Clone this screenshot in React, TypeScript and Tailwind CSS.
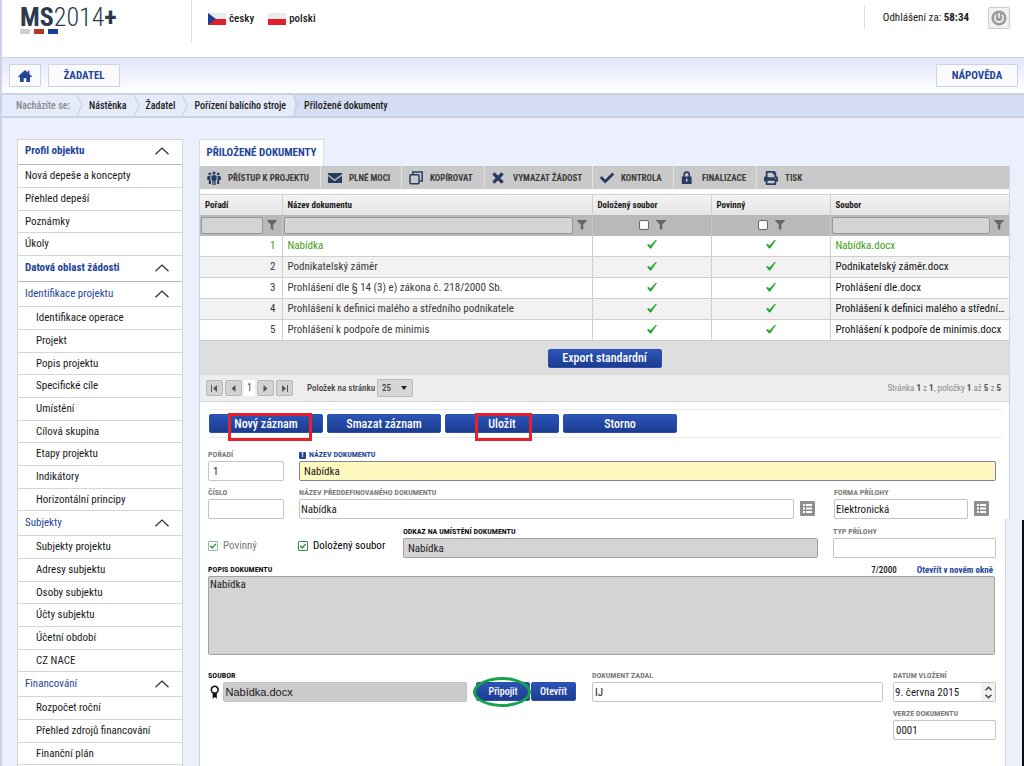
import type { InputHTMLAttributes, ReactNode } from "react";
import { FaCheck, FaFilter, FaPrint } from "react-icons/fa";

const toolbar: { label: string; icon: ReactNode; width: string }[] = [
  { label: "PŘÍSTUP K PROJEKTU", icon: <PeopleIcon />, width: "w-[121px]" },
  { label: "PLNÉ MOCI", icon: <MailIcon />, width: "w-[81px]" },
  { label: "KOPÍROVAT", icon: <CopyIcon />, width: "w-[83px]" },
  { label: "VYMAZAT ŽÁDOST", icon: <CrossIcon />, width: "w-[108px]" },
  { label: "KONTROLA", icon: <FaCheck size={14} />, width: "w-[81px]" },
  { label: "FINALIZACE", icon: <LockIcon />, width: "w-[83px]" },
  { label: "TISK", icon: <FaPrint size={14} />, width: "w-[80px]" },
];

const documents = [
  { name: "Nabídka", file: "Nabídka.docx" },
  { name: "Podnikatelský záměr", file: "Podnikatelský záměr.docx" },
  { name: "Prohlášení dle § 14 (3) e) zákona č. 218/2000 Sb.", file: "Prohlášení dle.docx" },
  {
    name: "Prohlášení k definici malého a středního podnikatele",
    file: "Prohlášení k definici malého a středního podnikatele.docx",
  },
  { name: "Prohlášení k podpoře de minimis", file: "Prohlášení k podpoře de minimis.docx" },
];

function PeopleIcon() {
  return (
    <svg width="14" height="14" viewBox="0 0 14 14" fill="currentColor">
      <circle cx="7" cy="2" r="1.6" />
      <circle cx="2.8" cy="3" r="1.4" />
      <circle cx="11.2" cy="3" r="1.4" />
      <path d="M5.200 4.200h3.600l.8.900v3.900h-.9V14H7.400v-4h-.8v4H5.300V9h-.9V5.100z" />
      <path d="M.8 5h2.600v4.600h.6V13H1.800V9H.2V6zM13.200 5h-2.600v4.600H10V13h2.200V9h1.600V6z" />
    </svg>
  );
}

function MailIcon() {
  return (
    <svg width="14" height="12" viewBox="0 0 14 12" fill="currentColor">
      <path d="M0 1h14v1.2L6.6 7.6 0 2.6z" />
      <path d="M0 4l6.6 5L14 3.8V11H0z" />
    </svg>
  );
}

function CopyIcon() {
  return (
    <svg width="14" height="14" viewBox="0 0 14 14" fill="none" stroke="currentColor" strokeWidth="1.5">
      <path d="M3.8 3.5V1h9.4v9h-2.4" />
      <rect x="1" y="3.7" width="9" height="9" rx="1" />
    </svg>
  );
}

function CrossIcon() {
  return (
    <svg width="12" height="12" viewBox="0 0 12 12" stroke="currentColor" strokeWidth="3.4">
      <path d="M1.4 1.4l9.2 9.2M10.6 1.4l-9.2 9.2" />
    </svg>
  );
}

function LockIcon() {
  return (
    <svg width="12" height="13" viewBox="0 0 12 13">
      <path d="M3.2 6V3.600a2.500 2.500 0 0 1 5 0V6" fill="none" stroke="currentColor" strokeWidth="1.600" />
      <path d="M.8 5.500h9.800V13H.8z" fill="currentColor" />
      <path d="M5.700 7.500v3.200" stroke="#c9c9c9" strokeWidth="1.500" />
    </svg>
  );
}

function HomeIcon() {
  return (
    <svg width="14" height="12" viewBox="0 0 14 12" fill="currentColor">
      <path d="M7 0l2.6 2.4V.8h1.8V4L14 6.4l-.9 1L12 6.5V12H8.3V8.2H5.7V12H2V6.5l-1.1.9-.9-1z" />
    </svg>
  );
}

function PowerIcon() {
  return (
    <svg width="16" height="16" viewBox="0 0 16 16" fill="none">
      <circle cx="8" cy="8" r="7.6" fill="#9a9da0" />
      <path d="M5.2 5a4.1 4.1 0 1 0 5.6 0M8 3v5" stroke="#f4f4f4" strokeWidth="1.6" />
    </svg>
  );
}

function ChevronUp() {
  return (
    <svg width="14" height="8" viewBox="0 0 14 8" fill="none" stroke="#2b2b2b" strokeWidth="1.2">
      <path d="M.5 7.2L7 1l6.500 6.200" />
    </svg>
  );
}

function Tick() {
  return (
    <svg className="mx-auto mb-[2px]" width="10" height="9" viewBox="0 0 10 9" fill="#27a832">
      <path d="M0 4.800l1.800-.9 1.700 1.700L8.600 0H10L4.200 8.600H3z" />
    </svg>
  );
}

function RibbonIcon() {
  return (
    <svg width="10" height="14" viewBox="0 0 10 14" fill="none">
      <path d="M2.8 8h4.4v6L5 12.4 2.8 14z" fill="#111" />
      <circle cx="5" cy="4.6" r="3.6" fill="#fff" stroke="#111" strokeWidth="1.7" />
    </svg>
  );
}

function SideHead({ children, strong }: { children: string; strong?: boolean }) {
  return (
    <button
      type="button"
      className={`flex w-full items-center justify-between border-b pr-[13px] pl-[7px] text-left text-[#24459a] ${
        strong ? "h-[26px] border-[#b5b5b5] pb-[2px] font-bold first:h-[25px]" : "h-[25px] border-[#d6d6d6]"
      }`}
    >
      <span>{children}</span>
      <ChevronUp />
    </button>
  );
}

function SideList({ items, nested }: { items: string[]; nested?: boolean }) {
  return (
    <ul>
      {items.map((item) => (
        <li key={item} className="h-[23px] border-b border-[#d6d6d6] nth-[3n]:h-[22px]">
          <a href="#" className={`flex h-full items-center ${nested ? "pl-[18px]" : "pl-[7px]"}`}>
            {item}
          </a>
        </li>
      ))}
    </ul>
  );
}

function BlueButton({ children, className }: { children: string; className: string }) {
  return (
    <button
      type="button"
      className={`rounded-[2px] border border-[#2a4fae] bg-linear-to-b from-[#2b55b8] to-[#1c3c90] font-medium whitespace-nowrap text-white ${className}`}
    >
      {children}
    </button>
  );
}

function FieldLabel({ id, tone, children }: { id: string; tone?: string; children: ReactNode }) {
  return (
    <label htmlFor={id} className={`flex h-[12px] items-center gap-[3px] text-[8px] leading-[12px] font-bold whitespace-nowrap ${tone ?? "text-[#7c7c7c]"}`}>
      {children}
    </label>
  );
}

function TextInput({ look, ...rest }: InputHTMLAttributes<HTMLInputElement> & { look?: string }) {
  return (
    <input
      type="text"
      className={`h-[20px] w-full min-w-0 rounded-[2px] border text-[11px] outline-none ${look ?? "border-[#c3c3c8] bg-white px-[2px]"}`}
      {...rest}
    />
  );
}

function PickButton({ label }: { label: string }) {
  return (
    <button type="button" aria-label={label} className="mb-[3px] grid size-[15px] shrink-0 place-items-center rounded-[1px] bg-[#8f8f8f]">
      <svg width="9" height="9" viewBox="0 0 9 9" fill="#fff">
        <path d="M0 0h2v2H0zM3 0h6v2H3zM0 3.5h2v2H0zM3 3.5h6v2H3zM0 7h2v2H0zM3 7h6v2H3z" />
      </svg>
    </button>
  );
}

function CheckField({ label, disabled }: { label: string; disabled?: boolean }) {
  return (
    <label className={`flex items-center gap-[5px] whitespace-nowrap ${disabled ? "text-[#777]" : "text-black"}`}>
      <span className="relative size-[10px]">
        <input
          type="checkbox"
          defaultChecked
          disabled={disabled}
          className="peer absolute inset-0 size-[10px] appearance-none rounded-[1px] border border-[#3b8a58] bg-white disabled:border-[#8dbb9c]"
        />
        <svg className="pointer-events-none absolute inset-0 hidden peer-checked:block" width="10" height="10" viewBox="0 0 10 10" fill="none" stroke="#1f8a3c" strokeWidth="1.300">
          <path d="M2.2 4.8l2 2.2 3.6-4.2" />
        </svg>
      </span>
      {label}
    </label>
  );
}

function PageButton({ label, path }: { label: string; path: string }) {
  return (
    <button type="button" aria-label={label} className="grid h-[16px] w-[17px] place-items-center rounded-[2px] border border-[#b9b9b9] bg-[#d3d3d3]">
      <svg width="7" height="7" viewBox="0 0 7 7" fill="#555">
        <path d={path} />
      </svg>
    </button>
  );
}

function FilterText({ label }: { label: string }) {
  return (
    <div className="flex items-center gap-[4px] pr-[5px] pl-px">
      <input aria-label={label} type="text" className="h-[17px] w-full min-w-0 rounded-[2px] border border-[#979797] bg-[#d4d4d4]" />
      <FaFilter size={10} className="shrink-0 text-[#666]" />
    </div>
  );
}

function FilterCheck({ label }: { label: string }) {
  return (
    <div className="flex items-center justify-center gap-[7px] pl-[2px]">
      <input aria-label={label} type="checkbox" className="size-[10px] appearance-none rounded-[2px] border border-[#666] bg-white" />
      <FaFilter size={10} className="text-[#666]" />
    </div>
  );
}

function Crumb({ children, tone }: { children: string; tone: string }) {
  return (
    <li className={`relative flex h-full items-center pr-[8px] pl-[11px] ${tone}`}>
      {children}
      <svg className="absolute top-0 -right-[5px] z-10" width="6" height="21" viewBox="0 0 6 21" fill="none" stroke="#c3cbe0">
        <path d="M0 0l5 10.5L0 21" />
      </svg>
    </li>
  );
}

export default function App() {
  return (
    <div className="relative h-screen overflow-hidden border-l-2 border-[#cdd0ea] bg-[#ecf0fc] font-['Roboto_Condensed','Liberation_Sans_Narrow','Roboto',sans-serif] text-[11px] leading-[14px] text-[#1a1a1a]">
      <header className="flex h-[58px] justify-between border-b border-[#ccd1dc] bg-white pr-[14px] pl-[18px]">
        <div className="flex">
          <div className="h-[42px] w-[172px] border-r border-[#dddddd] pt-[3px]">
            <div className="text-[26px] leading-[28px] whitespace-nowrap text-[#2c3a4b]">
              <span className="font-bold">MS</span>
              <span className="font-light">2014</span>
              <span className="font-bold">+</span>
            </div>
            <div className="-mt-[2px] flex gap-[4px]">
              <span className="h-[5px] w-[10px] bg-[#cfcfcf]" />
              <span className="h-[5px] w-[10px] bg-[#b2352b]" />
              <span className="h-[5px] w-[10px] bg-[#1c3f94]" />
            </div>
          </div>
          <nav className="flex h-[38px] items-center gap-[14px] pl-[16px] font-medium">
            <a href="#" className="flex items-center gap-[3px]">
              <svg width="18" height="12" viewBox="0 0 18 12">
                <path fill="#e9ebef" d="M0 0h18v6H0z" />
                <path fill="#e01f2d" d="M0 6h18v6H0z" />
                <path fill="#1c3f94" d="M0 0l8 6-8 6z" />
              </svg>
              česky
            </a>
            <a href="#" className="flex items-center gap-[3px]">
              <svg width="18" height="12" viewBox="0 0 18 12">
                <path fill="#e9ebef" d="M0 0h18v6H0z" />
                <path fill="#e01f2d" d="M0 6h18v6H0z" />
              </svg>
              polski
            </a>
          </nav>
        </div>
        <div className="mt-[6px] flex h-[23px] items-center border-l border-[#dddddd] pl-[18px]">
          Odhlášení za:&nbsp;<strong>58:34</strong>
          <button type="button" aria-label="Odhlásit" className="ml-[19px] grid size-[22px] place-items-center rounded-[2px] border border-[#ccc] bg-[#f1f1f1]">
            <PowerIcon />
          </button>
        </div>
      </header>

      <nav className="flex h-[37px] items-center justify-between border-b-2 border-[#ccd1de] bg-linear-to-b from-[#e1e8fb] to-white pr-[6px] pl-[7px] font-bold text-[#24459a]">
        <div className="flex gap-[7px]">
          <button type="button" aria-label="Domů" className="grid h-[23px] w-[32px] place-items-center rounded-[1px] border border-[#cfd3de] bg-[#fbfbfd]">
            <HomeIcon />
          </button>
          <button type="button" className="h-[23px] w-[72px] rounded-[1px] border border-[#cfd3de] bg-[#fbfbfd]">ŽADATEL</button>
        </div>
        <button type="button" className="h-[23px] w-[82px] rounded-[1px] border border-[#cfd3de] bg-[#fbfbfd]">NÁPOVĚDA</button>
      </nav>

      <ol className="flex h-[23px] items-center border-b-2 border-[#c9cfe2] bg-[#d5ddf2] text-[10px] font-medium whitespace-nowrap">
        <Crumb tone="bg-[#e6ebfa] pl-[14px]! text-[#858891]">Nacházíte se:</Crumb>
        <Crumb tone="bg-[#e6ebfa]">Nástěnka</Crumb>
        <Crumb tone="bg-[#e6ebfa]">Žadatel</Crumb>
        <Crumb tone="bg-[#e6ebfa]">Pořízení balícího stroje</Crumb>
        <li className="pl-[10px]">Přiložené dokumenty</li>
      </ol>

      <div className="flex gap-[16px] pt-[21px] pr-[14px] pl-[15px]">
        <aside className="w-[166px] shrink-0 border border-[#d6d6d6] bg-white">
          <SideHead strong>Profil objektu</SideHead>
          <SideList items={["Nová depeše a koncepty", "Přehled depeší", "Poznámky", "Úkoly"]} />
          <SideHead strong>Datová oblast žádosti</SideHead>
          <SideHead>Identifikace projektu</SideHead>
          <SideList
            nested
            items={[
              "Identifikace operace",
              "Projekt",
              "Popis projektu",
              "Specifické cíle",
              "Umístění",
              "Cílová skupina",
              "Etapy projektu",
              "Indikátory",
              "Horizontální principy",
            ]}
          />
          <SideHead>Subjekty</SideHead>
          <SideList nested items={["Subjekty projektu", "Adresy subjektu", "Osoby subjektu", "Účty subjektu", "Účetní období", "CZ NACE"]} />
          <SideHead>Financování</SideHead>
          <SideList nested items={["Rozpočet roční", "Přehled zdrojů financování", "Finanční plán"]} />
        </aside>

        <main className="min-w-0 flex-1">
          <h1 className="flex h-[27px] w-[125px] items-center justify-center border border-b-0 border-[#d8dbe6] bg-white text-[11px] font-bold whitespace-nowrap text-[#24459a]">
            PŘILOŽENÉ DOKUMENTY
          </h1>
          <div className="border-x border-[#cfd3e0] bg-white">
            <div className="flex h-[23px] bg-[#c9c9c9]">
              {toolbar.map((tool) => (
                <button
                  key={tool.label}
                  type="button"
                  className={`flex shrink-0 items-center gap-[7px] border-r border-[#e2e2e2] pl-[7px] text-[9px] font-bold whitespace-nowrap text-[#3b3b3b] last:border-r-0 ${tool.width}`}
                >
                  <span className="w-[14px] text-[#263c62]">{tool.icon}</span>
                  {tool.label}
                </button>
              ))}
            </div>

            <table className="mt-[5px] w-full table-fixed border-collapse border-t border-[#d0d0d0]">
              <colgroup>
                <col className="w-[82px]" />
                <col />
                <col className="w-[119px]" />
                <col className="w-[119px]" />
                <col className="w-[179px]" />
              </colgroup>
              <thead>
                <tr className="h-[20px] bg-linear-to-b from-[#f4f4f4] to-[#e4e4e4] text-left text-[9px]">
                  {["Pořadí", "Název dokumentu", "Doložený soubor", "Povinný", "Soubor"].map((title) => (
                    <th key={title} scope="col" className="border-r border-[#cfcfcf] p-0 pl-[5px] font-bold last:border-r-0">
                      {title}
                    </th>
                  ))}
                </tr>
                <tr className="h-[21px] bg-[#b9b9b9]">
                  <td className="border-r border-[#c6c6c6] p-0"><FilterText label="Filtr pořadí" /></td>
                  <td className="border-r border-[#c6c6c6] p-0"><FilterText label="Filtr názvu" /></td>
                  <td className="border-r border-[#c6c6c6] p-0"><FilterCheck label="Filtr doložených souborů" /></td>
                  <td className="border-r border-[#c6c6c6] p-0"><FilterCheck label="Filtr povinných" /></td>
                  <td className="p-0"><FilterText label="Filtr souboru" /></td>
                </tr>
              </thead>
              <tbody>
                {documents.map((doc, i) => (
                  <tr key={doc.name} className={`h-[21px] border-b border-[#cfcfcf] even:bg-[#f2f2f2] ${i === 0 ? "text-[#43a012]" : "text-[#3a3a3a]"}`}>
                    <td className="border-r border-[#cfcfcf] p-0 pr-[6px] text-right">{i + 1}</td>
                    <td className="truncate border-r border-[#cfcfcf] p-0 pl-[5px]">{doc.name}</td>
                    <td className="border-r border-[#cfcfcf] p-0"><Tick /></td>
                    <td className="border-r border-[#cfcfcf] p-0"><Tick /></td>
                    <td className={`truncate p-0 pr-px pl-[5px] ${i === 0 ? "" : "text-[#111]"}`}>{doc.file}</td>
                  </tr>
                ))}
              </tbody>
            </table>

            <div className="flex h-[34px] items-center justify-center bg-[#dedede]">
              <BlueButton className="h-[19px] w-[114px] text-[12px]">Export standardní</BlueButton>
            </div>

            <div className="flex h-[27px] items-center justify-between border-b border-[#d3d6dd] bg-[#ededed] pr-[8px] pl-[6px] text-[9px] text-[#444]">
              <div className="flex items-center gap-[2px]">
                <PageButton label="První stránka" path="M0 0h1v7H0zM6 0v7L2 3.500z" />
                <PageButton label="Předchozí stránka" path="M5.500 0v7L1.500 3.500z" />
                <span className="grid h-[16px] w-[11px] place-items-center bg-white text-[10px]">1</span>
                <PageButton label="Další stránka" path="M1.500 0v7l4-3.500z" />
                <PageButton label="Poslední stránka" path="M6 0h1v7H6zM1 0v7l4-3.500z" />
                <label htmlFor="page-size" className="pl-[12px] font-medium">Položek na stránku</label>
                <span className="relative">
                  <select id="page-size" defaultValue="25" className="h-[18px] w-[36px] appearance-none rounded-[1px] border border-[#b9b9b9] bg-[#d6d6d6] pl-[4px] text-[9px] font-medium">
                    <option>25</option>
                    <option>50</option>
                  </select>
                  <svg className="pointer-events-none absolute top-[7px] right-[6px]" width="6" height="4" viewBox="0 0 6 4" fill="#222">
                    <path d="M0 0h6L3 4z" />
                  </svg>
                </span>
              </div>
              <p className="text-[#8a8a8a]">
                Stránka <b className="text-[#555]">1</b> z <b className="text-[#555]">1</b>, položky <b className="text-[#555]">1</b> až <b className="text-[#555]">5</b> z <b className="text-[#555]">5</b>
              </p>
            </div>

            <div className="mt-[7px] mr-[6px] ml-[8px] flex h-[29px] items-center gap-[4px] border-y border-[#ececec] pl-[1px]">
              <div className="relative">
                <BlueButton className="block h-[19px] w-[114px] text-[12px]">Nový záznam</BlueButton>
                <span className="pointer-events-none absolute -top-px left-[19px] h-[28px] w-[84px] border-3 border-[#e8202e]" />
              </div>
              <BlueButton className="h-[19px] w-[114px] text-[12px]">Smazat záznam</BlueButton>
              <div className="relative">
                <BlueButton className="block h-[19px] w-[114px] text-[12px]">Uložit</BlueButton>
                <span className="pointer-events-none absolute -top-px left-[30px] h-[28px] w-[57px] border-3 border-[#e8202e]" />
              </div>
              <BlueButton className="h-[19px] w-[114px] text-[12px]">Storno</BlueButton>
            </div>

            <div className="flex gap-[15px] pt-[11px] pr-[13px] pl-[8px]">
              <div className="w-[76px]">
                <FieldLabel id="order">POŘADÍ</FieldLabel>
                <TextInput id="order" defaultValue="1" look="border-[#c3c3c8] px-[4px]" />
              </div>
              <div className="flex-1">
                <FieldLabel id="name" tone="text-[#24459a]">
                  <span className="grid size-[7px] place-items-center rounded-[1px] bg-[#24459a] text-[7px] leading-[7px] text-white">!</span>
                  NÁZEV DOKUMENTU
                </FieldLabel>
                <TextInput id="name" defaultValue="Nabídka" look="border-[#7d8296] bg-[#fff8bf] px-[4px]" />
              </div>
            </div>
            <div className="flex gap-[15px] pt-[6px] pr-[13px] pl-[8px]">
              <div className="w-[76px]">
                <FieldLabel id="number">ČÍSLO</FieldLabel>
                <TextInput id="number" />
              </div>
              <div className="flex flex-1 items-end gap-[6px] pr-[4px]">
                <div className="flex-1">
                  <FieldLabel id="preset">NÁZEV PŘEDDEFINOVANÉHO DOKUMENTU</FieldLabel>
                  <TextInput id="preset" defaultValue="Nabídka" look="border-[#c3c3c8] px-px" />
                </div>
                <PickButton label="Vybrat dokument" />
              </div>
              <div className="flex w-[162px] items-end gap-[6px]">
                <div className="w-[134px]">
                  <FieldLabel id="form">FORMA PŘÍLOHY</FieldLabel>
                  <TextInput id="form" defaultValue="Elektronická" look="border-[#c3c3c8] px-px" />
                </div>
                <PickButton label="Vybrat formu" />
              </div>
            </div>
          </div>

          <div className="mr-[4px] h-[260px] border-x border-[#cfd3e0] bg-white pr-[9px] pl-[8px]">
            <div className="flex pt-[7px]">
              <div className="w-[90px] pt-[13px]"><CheckField label="Povinný" disabled /></div>
              <div className="w-[105px] pt-[13px]"><CheckField label="Doložený soubor" /></div>
              <div className="mr-[15px] flex-1">
                <FieldLabel id="link" tone="text-[#111]">ODKAZ NA UMÍSTĚNÍ DOKUMENTU</FieldLabel>
                <TextInput id="link" defaultValue="Nabídka" look="border-[#a2a2a2] bg-[#d4d4d4] px-[4px]" />
              </div>
              <div className="w-[163px]">
                <FieldLabel id="type">TYP PŘÍLOHY</FieldLabel>
                <TextInput id="type" />
              </div>
            </div>

            <div className="mr-px pt-[6px]">
              <div className="flex items-center justify-between">
                <FieldLabel id="description" tone="text-[#111]">POPIS DOKUMENTU</FieldLabel>
                <div className="flex gap-[20px] pr-[2px] text-[9px] leading-[12px]">
                  <span className="font-medium">7/2000</span>
                  <a href="#" className="font-bold text-[#24459a]">Otevřít v novém okně</a>
                </div>
              </div>
              <textarea
                id="description"
                defaultValue="Nabídka"
                className="block h-[79px] w-full resize-none rounded-[2px] border border-[#a2a2a2] bg-[#d4d4d4] px-px pt-px text-[11px] leading-[14px]"
              />
            </div>

            <div className="flex items-start pt-[15px]">
              <div className="w-[259px]">
                <FieldLabel id="file" tone="text-[#111]">SOUBOR</FieldLabel>
                <div className="flex items-center gap-[4px] pl-[2px]">
                  <RibbonIcon />
                  <TextInput
                    id="file"
                    defaultValue="Nabídka.docx"
                    look="border-[#c4c4c4] bg-[#cbcbcb] px-px font-['Liberation_Sans',Arial,sans-serif]"
                  />
                </div>
              </div>
              <div className="flex gap-px pt-[12px] pr-[16px] pl-[9px]">
                <div className="relative">
                  <BlueButton className="h-[19px] w-[54px] text-[10px]">Připojit</BlueButton>
                  <span className="pointer-events-none absolute -top-[5px] -left-[3px] h-[30px] w-[58px] rounded-[50%] border-3 border-[#16a34a]" />
                </div>
                <BlueButton className="h-[19px] w-[45px] text-[10px]">Otevřít</BlueButton>
              </div>
              <div className="mr-[10px] flex-1">
                <FieldLabel id="author">DOKUMENT ZADAL</FieldLabel>
                <TextInput id="author" defaultValue="IJ" />
              </div>
              <div className="w-[103px]">
                <FieldLabel id="date">DATUM VLOŽENÍ</FieldLabel>
                <div className="flex rounded-[2px] border border-[#c3c3c8]">
                  <input id="date" type="text" defaultValue="9. června 2015" className="h-[18px] w-full min-w-0 px-px text-[11px]" />
                  <div className="flex w-[14px] shrink-0 flex-col items-center justify-evenly bg-[#f1f1f1]">
                    <button type="button" aria-label="Další den" className="h-[6px]">
                      <svg width="7" height="5" viewBox="0 0 7 5" fill="none" stroke="#444" strokeWidth="1.4"><path d="M.5 4.300l3-3 3 3" /></svg>
                    </button>
                    <button type="button" aria-label="Předchozí den" className="h-[6px]">
                      <svg width="7" height="5" viewBox="0 0 7 5" fill="none" stroke="#444" strokeWidth="1.4"><path d="M.5 .700l3 3 3-3" /></svg>
                    </button>
                  </div>
                </div>
                <div className="pt-[6px]">
                  <FieldLabel id="version">VERZE DOKUMENTU</FieldLabel>
                  <TextInput id="version" defaultValue="0001" />
                </div>
              </div>
            </div>
          </div>
        </main>
      </div>
      <span className="absolute right-0 bottom-0 h-[246px] w-[2px] bg-[#0c0c10]" />
    </div>
  );
}
